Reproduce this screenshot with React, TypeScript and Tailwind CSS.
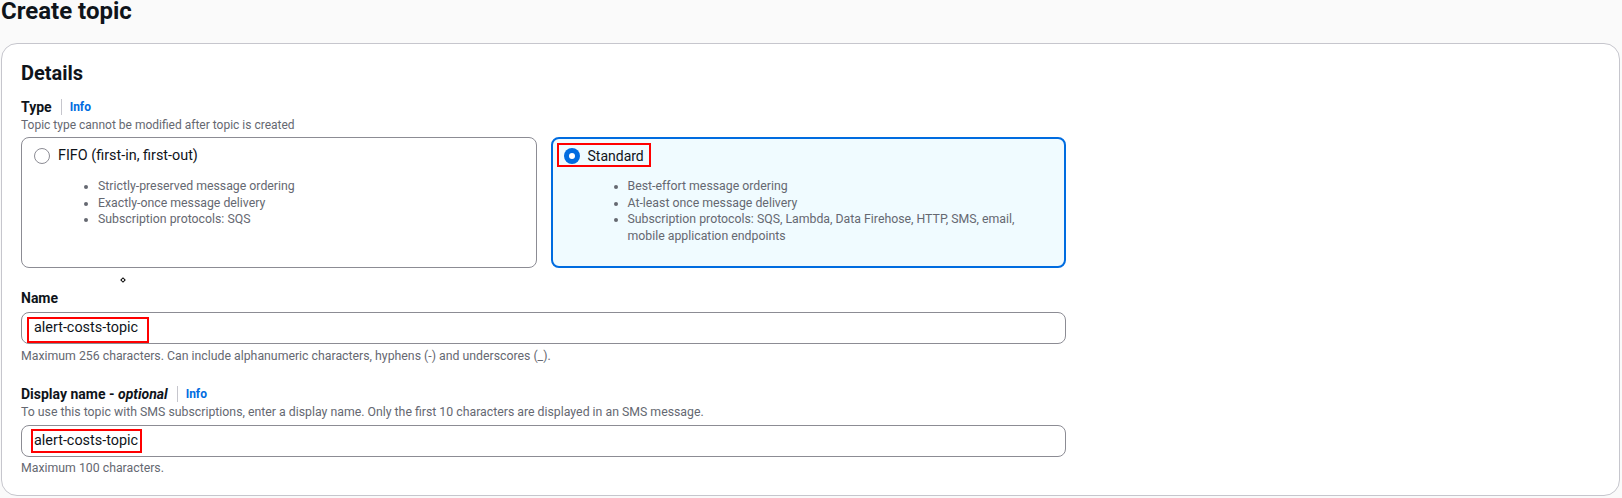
import React from "react";

const fifoItems = [
  "Strictly-preserved message ordering",
  "Exactly-once message delivery",
  "Subscription protocols: SQS",
];

function InfoLink() {
  return (
    <>
      <span className="ml-[9px] h-4 border-l border-[#c6c6cd]" />
      <a className="ml-[8px] text-[12px] font-bold leading-4 text-[#006ce0]">Info</a>
    </>
  );
}

function Radio({ checked }: { checked: boolean }) {
  if (checked) {
    return (
      <span className="flex h-4 w-4 items-center justify-center rounded-full bg-[#006ce0]">
        <span className="h-[6px] w-[6px] rounded-full bg-white" />
      </span>
    );
  }
  return <span className="h-4 w-4 rounded-full border-[1.5px] border-[#8c8c94] bg-white" />;
}

export default function App() {
  return (
    <div className="min-h-[498px] bg-[#fafafa] pl-[1px] font-['Roboto',sans-serif] text-[#0f141a]">
      <h1 className="text-[24px] font-bold leading-[22px]">Create topic</h1>

      <div className="mt-[21px] w-[1619px] rounded-2xl border border-[#c6c6cd] bg-white pt-[17px] pb-[19px] pl-[19px]">
        <h2 className="text-[20px] font-bold leading-6">Details</h2>

        <div className="w-[1045px]">
          {/* Type */}
          <div className="mt-3 flex items-center">
            <span className="text-[14px] font-bold leading-5">Type</span>
            <InfoLink />
          </div>
          <p className="text-[12px] leading-4 text-[#656871]">Topic type cannot be modified after topic is created</p>

          <div className="mt-1 grid grid-cols-2 gap-[14px]">
            <div className="rounded-lg border border-[#8c8c94] bg-white pt-[7px] pl-[12px] pb-[23px]">
              <div className="flex h-[22px] items-center gap-2">
                <Radio checked={false} />
                <span className="text-[14.4px] leading-[22px]">FIFO (first-in, first-out)</span>
              </div>
              <ul className="mt-[11px] list-disc pl-[64px] text-[12.3px] leading-[16.5px] text-[#656871]">
                {fifoItems.map((t) => (
                  <li key={t}>{t}</li>
                ))}
              </ul>
            </div>

            <div className="rounded-lg border-2 border-[#006ce0] bg-[#f0fbff] pt-[6px] pl-[11px] pb-[22px]">
              <div className="relative flex h-[22px] w-fit items-center gap-2">
                <Radio checked />
                <span className="text-[14px] leading-[22px]">Standard</span>
                <span className="absolute -top-[2px] -right-[7px] bottom-0 -left-[7px] border-2 border-[#ff0000]" />
              </div>
              <ul className="mt-[11px] list-disc pl-[64px] text-[12.3px] leading-[16.5px] text-[#656871]">
                <li>Best-effort message ordering</li>
                <li>At-least once message delivery</li>
                <li>
                  Subscription protocols: SQS, Lambda, Data Firehose, HTTP, SMS, email,
                  <br />
                  mobile application endpoints
                </li>
              </ul>
            </div>
          </div>

          <div className="relative h-0">
            <span className="absolute top-[10px] left-[100px] h-[4px] w-[4px] rotate-45 border border-black bg-white" />
          </div>

          {/* Name */}
          <div className="mt-[20px] text-[14px] font-bold leading-5">Name</div>
          <div className="relative mt-1 flex h-8 items-center rounded-lg border border-[#8c8c94] bg-white px-3 text-[14.4px]">
            alert-costs-topic
            <span className="absolute top-[4px] left-[5px] h-[26px] w-[122px] border-2 border-[#ff0000]" />
          </div>
          <p className="mt-1 text-[12.3px] leading-4 text-[#656871]">
            Maximum 256 characters. Can include alphanumeric characters, hyphens (-) and underscores (_).
          </p>

          {/* Display name */}
          <div className="mt-[20px] flex items-center">
            <span className="text-[14px] font-bold leading-5">
              Display name - <i>optional</i>
            </span>
            <InfoLink />
          </div>
          <p className="text-[12.3px] leading-4 text-[#656871]">
            To use this topic with SMS subscriptions, enter a display name. Only the first 10 characters are displayed in an SMS message.
          </p>
          <div className="relative mt-[5px] flex h-8 items-center rounded-lg border border-[#8c8c94] bg-white px-3 text-[14.4px]">
            alert-costs-topic
            <span className="absolute top-[3px] left-[9px] h-[24px] w-[111px] border-2 border-[#ff0000]" />
          </div>
          <p className="mt-[3px] text-[12.3px] leading-4 text-[#656871]">Maximum 100 characters.</p>
        </div>
      </div>
    </div>
  );
}
